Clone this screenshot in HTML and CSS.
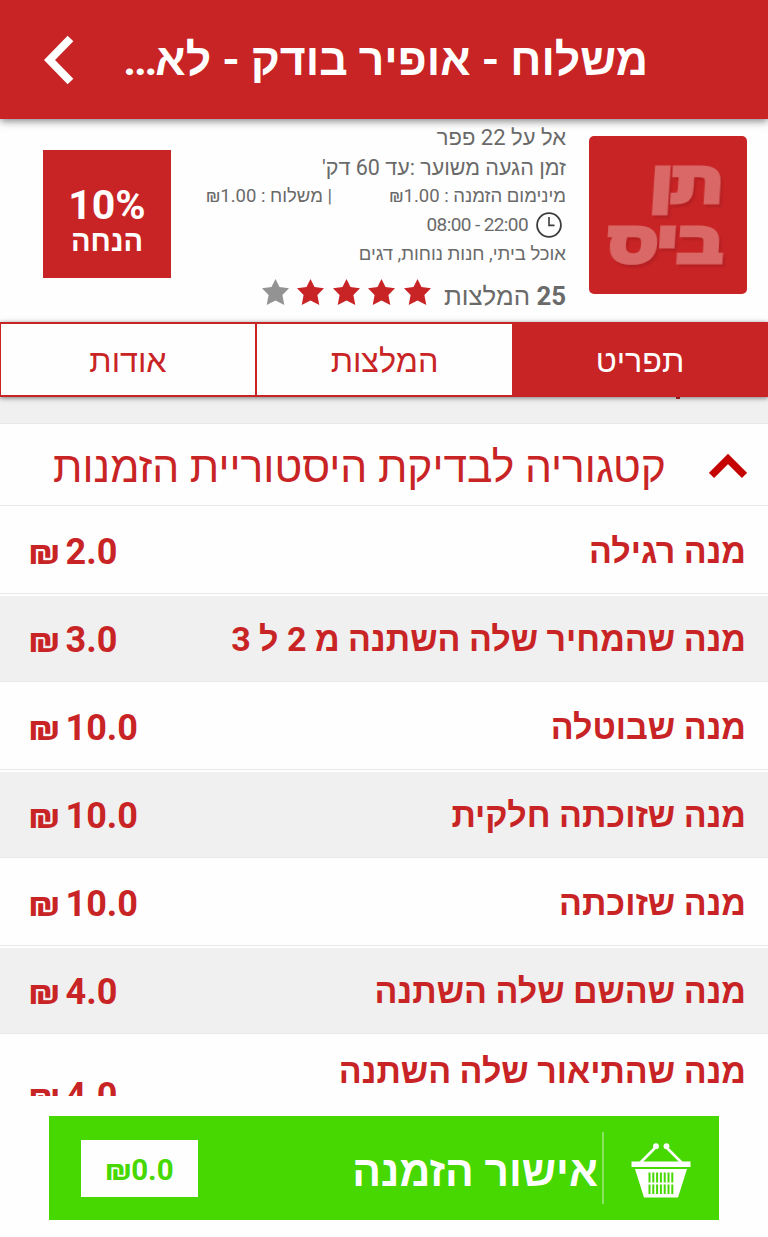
FILE: index.html
```html
<!DOCTYPE html>
<html lang="he" dir="rtl">
	<head>
		<meta charset="UTF-8" />
		<meta name="viewport" content="width=device-width, initial-scale=1.0" />
		<title>תן ביס</title>
		<link rel="stylesheet" href="styles.css">
	</head>
	<body>
		<div class="wrap">
			<div class="header">
				<h1>משלוח - אופיר בודק - לא<span class="dots">...</span></h1>
				<a href="javascript:;" class="back">
					<svg width="30" height="50" viewBox="0 0 30 50"><path d="M26.5 3.5L5.500 25L26.5 46.5" fill="none" stroke="#fff" stroke-width="8" /></svg>
				</a>
			</div>

			<div class="info">
				<div class="logo">
					<span class="logo_top">תן</span>
					<span class="logo_bottom">ביס</span>
				</div>
				<div class="detail">
					<p class="address"><span>אל על 22 פפר</span></p>
					<p class="arrive"><span>זמן הגעה משוער :עד 60 דק'</span></p>
					<p class="cost">
						<span class="min">מינימום הזמנה : ‎₪1.00</span>
						<span class="fee">| משלוח : ‎₪1.00</span>
					</p>
					<p class="hours">
						<svg width="26" height="26" viewBox="0 0 26 26"><circle cx="13" cy="13" r="11.9" fill="none" stroke="#3c3c3c" stroke-width="1.8" /><path d="M13 5V13.4H18.5" fill="none" stroke="#3c3c3c" stroke-width="1.6" /></svg>
						<span dir="ltr">08:00 - 22:00</span>
					</p>
					<p class="kind"><span>אוכל ביתי, חנות נוחות, דגים</span></p>
					<div class="rate">
						<span class="rate_text"><b>25</b> המלצות</span>
						<div class="stars">
							<svg viewBox="0 0 27 26"><path d="M13.5 0L17.5 8L27 9.300L20.400 16L22.3 26L13.5 21.6L4.7 26L6.600 16L0 9.300L9.500 8Z" /></svg>
							<svg viewBox="0 0 27 26"><path d="M13.5 0L17.5 8L27 9.300L20.400 16L22.3 26L13.5 21.6L4.7 26L6.600 16L0 9.300L9.500 8Z" /></svg>
							<svg viewBox="0 0 27 26"><path d="M13.5 0L17.5 8L27 9.300L20.400 16L22.3 26L13.5 21.6L4.7 26L6.600 16L0 9.300L9.500 8Z" /></svg>
							<svg viewBox="0 0 27 26"><path d="M13.5 0L17.5 8L27 9.300L20.400 16L22.3 26L13.5 21.6L4.7 26L6.600 16L0 9.300L9.500 8Z" /></svg>
							<svg viewBox="0 0 27 26" class="off"><path d="M13.5 0L17.5 8L27 9.300L20.400 16L22.3 26L13.5 21.6L4.7 26L6.600 16L0 9.300L9.500 8Z" /></svg>
						</div>
					</div>
				</div>
				<div class="discount">
					<strong>10%</strong>
					<span>הנחה</span>
				</div>
			</div>

			<div class="tabs">
				<a href="javascript:;" class="active"><span>תפריט</span></a>
				<a href="javascript:;"><span>המלצות</span></a>
				<a href="javascript:;"><span>אודות</span></a>
			</div>

			<div class="menu">
				<div class="space"></div>
				<div class="category">
					<svg width="38" height="26" viewBox="0 0 38 26"><path d="M2.5 22.5L19 6L35.5 22.5" fill="none" stroke="#c40202" stroke-width="7.4" /></svg>
					<h2>קטגוריה לבדיקת היסטוריית הזמנות</h2>
				</div>
				<ul class="list">
					<li><span class="name">מנה רגילה</span><span class="price" dir="ltr"><i>₪</i>2.0</span></li>
					<li><span class="name">מנה שהמחיר שלה השתנה מ 2 ל 3</span><span class="price" dir="ltr"><i>₪</i>3.0</span></li>
					<li><span class="name">מנה שבוטלה</span><span class="price" dir="ltr"><i>₪</i>10.0</span></li>
					<li><span class="name">מנה שזוכתה חלקית</span><span class="price" dir="ltr"><i>₪</i>10.0</span></li>
					<li><span class="name">מנה שזוכתה</span><span class="price" dir="ltr"><i>₪</i>10.0</span></li>
					<li><span class="name">מנה שהשם שלה השתנה</span><span class="price" dir="ltr"><i>₪</i>4.0</span></li>
					<li class="tall"><span class="name">מנה שהתיאור שלה השתנה</span><span class="price" dir="ltr"><i>₪</i>4.0</span></li>
				</ul>
			</div>

			<div class="footer">
				<a href="javascript:;" class="order">
					<span class="basket">
						<svg width="60" height="56" viewBox="0 0 60 56">
							<path d="M9 20L25 4M51 20L35 4" stroke="#fff" stroke-width="2.6" />
							<circle cx="25" cy="3.2" r="2.9" fill="#fff" />
							<circle cx="35.5" cy="3.2" r="2.9" fill="#fff" />
							<path d="M0.5 18.5H59.5V24H0.5ZM4 26H56L47 54.5H13Z" fill="#fff" />
							<path d="M18.5 29.500V39.500M22.300 29.500V39.500M26.100 29.500V39.500M29.900 29.500V39.500M33.700 29.500V39.500M37.500 29.500V39.500M41.300 29.500V39.500M18.500 41.500V51M22.300 41.500V51M26.100 41.500V51M29.900 41.500V51M33.700 41.500V51M37.500 41.500V51M41.300 41.500V51" stroke="#46d800" stroke-width="2" />
						</svg>
					</span>
					<span class="order_text">אישור הזמנה</span>
					<span class="total" dir="ltr">₪0.0</span>
				</a>
			</div>
		</div>
	</body>
</html>
```
FILE: styles.css
```css
* {
	margin: 0;
	padding: 0;
	box-sizing: border-box;
}
body {
	font-family: Roboto, "Liberation Sans", sans-serif;
	background: #fefefe;
	color: #6a6a6a;
}
body a {
	text-decoration: none;
}
ul {
	list-style: none;
}
svg {
	display: block;
	flex-shrink: 0;
}

.wrap {
	width: 768px;
	height: 1237px;
	overflow: hidden;
	display: flex;
	flex-direction: column;
}

/* header */
.header {
	height: 119px;
	flex-shrink: 0;
	padding: 0 120px 0 44px;
	display: flex;
	align-items: center;
	justify-content: space-between;
	background: #c92425;
	box-shadow: 0 2px 8px rgba(0, 0, 0, 0.5);
	z-index: 1;
}
.header h1 {
	font-size: 44.5px;
	line-height: 60px;
	font-weight: 700;
	color: #fff;
	white-space: nowrap;
}
.header .dots {
	letter-spacing: -2.2px;
}

/* restaurant info */
.info {
	height: 203px;
	flex-shrink: 0;
	padding: 0 21px 0 43px;
	display: flex;
}
.logo {
	width: 158px;
	height: 158px;
	margin-top: 17px;
	padding: 17px 24px 0 0;
	border-radius: 5px;
	background: #c92425;
	color: #d96866;
	font-family: "Liberation Sans", sans-serif;
	font-weight: 700;
	font-size: 56px;
	-webkit-text-stroke: 5px #d96866;
}
.logo span {
	display: block;
	height: 60px;
	line-height: 60px;
	white-space: nowrap;
	transform-origin: right center;
	transform: scaleX(1.26) skewX(-3deg);
	filter: drop-shadow(2px 3px 1px rgba(160, 25, 28, 0.45));
}
.detail {
	width: 418px;
	padding: 4px 23px 0 0;
	white-space: nowrap;
}
.detail p {
	height: 30px;
	display: flex;
	align-items: center;
}
.detail .address {
	font-size: 22px;
}
.detail .arrive {
	font-size: 21.5px;
}
.detail .cost {
	height: 26px;
	font-size: 18.5px;
}
.cost .min {
	width: 234px;
}
.detail .hours {
	height: 31px;
	padding-right: 4px;
	gap: 8px;
	font-size: 19px;
	letter-spacing: -0.6px;
}
.detail .kind {
	height: 28px;
	font-size: 18.5px;
}
.rate {
	height: 48px;
	display: flex;
	align-items: center;
	gap: 13px;
	font-size: 25.8px;
}
.rate_text {
	padding-top: 7px;
}
.stars {
	display: flex;
	gap: 8.5px;
}
.stars svg {
	width: 27px;
	height: 26px;
	fill: #c92425;
}
.stars .off {
	fill: #939393;
}
.discount {
	width: 128px;
	height: 128px;
	margin-top: 31px;
	padding-top: 35px;
	background: #c92425;
	color: #fff;
	text-align: center;
}
.discount strong {
	display: block;
	font-size: 41px;
	line-height: 40px;
}
.discount span {
	display: block;
	font-size: 29px;
	line-height: 32px;
	font-weight: 700;
}

/* tabs */
.tabs {
	height: 75px;
	flex-shrink: 0;
	display: flex;
	border: 2px solid #c92425;
	border-width: 2px 0 2px 1px;
	box-shadow: 0 1px 5px rgba(0, 0, 0, 0.5);
	background: #fefefe;
	z-index: 1;
}
.tabs a {
	width: 256px;
	padding-top: 2px;
	display: flex;
	align-items: center;
	justify-content: center;
	font-size: 32.3px;
	color: #c92425;
}
.tabs a + a {
	width: 255px;
}
.tabs a + a + a {
	width: 256px;
	border-right: 2px solid #c92425;
}
.tabs .active {
	background: #c92425;
	color: #fff;
}

/* menu */
.menu {
	height: 699px;
	flex-shrink: 0;
	overflow: hidden;
}
.space {
	height: 27px;
	background: #f0f0f0;
	border-bottom: 1px solid #e8e8e8;
	position: relative;
}
.space::before {
	content: "";
	position: absolute;
	top: 0;
	right: 88px;
	width: 4px;
	height: 2px;
	background: #c92425;
}
.category {
	height: 82px;
	padding: 2px 21px 0 0;
	display: flex;
	align-items: center;
	gap: 43px;
	border-bottom: 1px solid #e8e8e8;
}
.category h2 {
	padding-top: 2px;
	font-size: 42.6px;
	font-weight: 400;
	color: #c92425;
	white-space: nowrap;
}
.list li {
	height: 88px;
	padding: 0 22px 0 29px;
	display: flex;
	align-items: center;
	justify-content: space-between;
	border-top: 2px solid #fefefe;
	border-bottom: 1px solid #e8e8e8;
	color: #c92425;
	white-space: nowrap;
}
.list li:nth-child(even) {
	background: #f0f0f0;
}
.name {
	font-size: 34px;
	font-weight: 700;
}
.price {
	padding-top: 3px;
	font-size: 36px;
	font-weight: 700;
}
.price i {
	margin-right: 6px;
	font-size: 35px;
	font-style: normal;
}
.list .tall {
	height: 120px;
}
.tall .name {
	align-self: flex-start;
	margin-top: 15px;
}

/* order button */
.footer {
	padding: 20px 49px 0;
}
.order {
	height: 104px;
	padding: 0 28px 0 32px;
	display: flex;
	align-items: center;
	background: #46d800;
	color: #fff;
}
.basket {
	height: 72px;
	padding: 5px 0 0 27px;
	display: flex;
	align-items: center;
	border-left: 2px solid #8ae35f;
}
.order_text {
	margin-right: 4px;
	padding-top: 5px;
	font-size: 42.6px;
	font-weight: 700;
	white-space: nowrap;
}
.total {
	width: 117px;
	height: 57px;
	margin-right: auto;
	padding-top: 3px;
	display: flex;
	align-items: center;
	justify-content: center;
	background: #fefefe;
	color: #46d800;
	font-size: 29.5px;
	font-weight: 700;
}
```
